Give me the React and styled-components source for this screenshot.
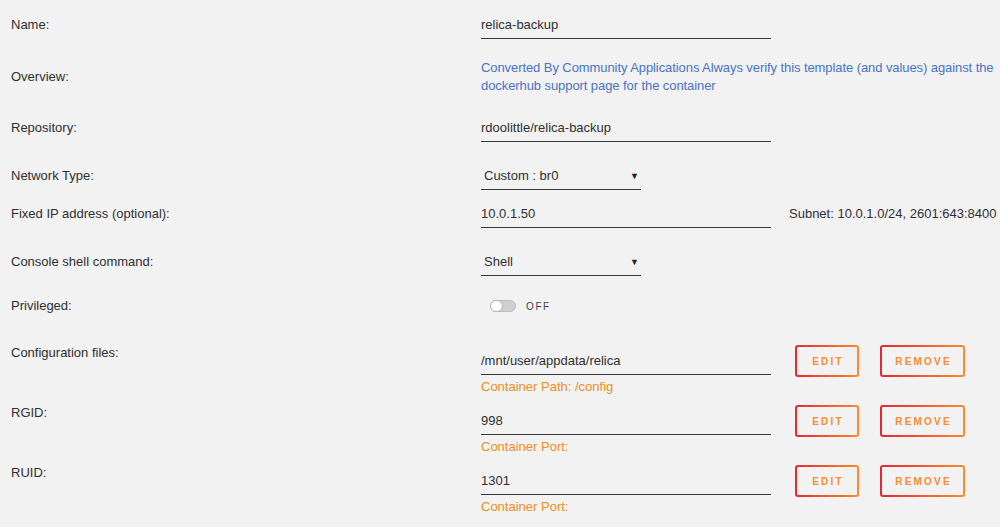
import styled, { createGlobalStyle } from "styled-components";

const GlobalStyle = createGlobalStyle`
  html, body {
    margin: 0;
    padding: 0;
    background: #f2f2f2;
    overflow: hidden;
  }
  body {
    font-family: "Liberation Sans", Arial, sans-serif;
    font-size: 13px;
    color: #2f2f2f;
  }
`;

const Form = styled.div`
  width: 1000px;
  height: 527px;
  overflow: hidden;
  white-space: nowrap;
`;

const Row = styled.div`
  display: grid;
  grid-template-columns: 481px 1fr;
  align-items: ${(p) => (p.$center ? "center" : "start")};
  margin-top: ${(p) => p.$top || 0}px;
  min-height: ${(p) => p.$height || 0}px;
`;

const Label = styled.div`
  padding-left: 11px;
  line-height: 20px;
`;

const Value = styled.div`
  display: flex;
  align-items: flex-start;
`;

const Field = styled.div`
  display: flex;
  flex-direction: column;
  margin-top: ${(p) => p.$top || 0}px;
`;

const Input = styled.div`
  width: ${(p) => p.$width || 290}px;
  box-sizing: border-box;
  line-height: 20px;
  padding: 0 0 3px ${(p) => p.$pad || 0}px;
  border-bottom: 1px solid #3a3a3a;
  display: flex;
  justify-content: space-between;
  align-items: center;
`;

const Arrow = styled.span`
  font-size: 9px;
  color: #222;
  padding-right: 2px;
`;

const Overview = styled.div`
  color: #4a72c4;
  line-height: 18px;
  white-space: normal;
  width: 519px;
  letter-spacing: -0.08px;
`;

const Subnet = styled.span`
  margin-left: 18px;
  line-height: 20px;
`;

const Hint = styled.div`
  color: #ee8f1c;
  line-height: 18px;
  margin-top: 3px;
`;

const Toggle = styled.div`
  display: flex;
  align-items: center;
  gap: 10px;
  padding-left: 9px;
  height: 20px;
`;

const Track = styled.div`
  width: 26px;
  height: 12px;
  border-radius: 6px;
  background: #cfcfcf;
  border: 1px solid #bdbdbd;
  box-sizing: border-box;
  position: relative;
`;

const Knob = styled.div`
  position: absolute;
  left: -1px;
  top: -1px;
  width: 13px;
  height: 12px;
  border-radius: 6px;
  background: #ffffff;
  border: 1px solid #b5b5b5;
  box-sizing: border-box;
`;

const ToggleText = styled.span`
  font-size: 10px;
  letter-spacing: 1.6px;
  color: #444;
`;

const Buttons = styled.div`
  display: flex;
  gap: 21px;
  margin-left: 24px;
  margin-top: 2px;
`;

const Btn = styled.button`
  width: ${(p) => p.$width}px;
  height: 32px;
  box-sizing: border-box;
  border: 2px solid transparent;
  border-radius: 3px;
  background: linear-gradient(#f2f2f2, #f2f2f2) padding-box,
    linear-gradient(90deg, #e5272f, #ff8a2e) border-box;
  color: #f58d33;
  font-family: "Liberation Sans", Arial, sans-serif;
  font-size: 10px;
  font-weight: bold;
  letter-spacing: 2.2px;
  padding: 0 0 0 2px;
  cursor: pointer;
`;

const pathRows = [
  { label: "Configuration files:", value: "/mnt/user/appdata/relica", hint: "Container Path: /config" },
  { label: "RGID:", value: "998", hint: "Container Port:" },
  { label: "RUID:", value: "1301", hint: "Container Port:" },
];

export default function App() {
  return (
    <Form>
      <GlobalStyle />
      <Row $top={15}>
        <Label>Name:</Label>
        <Value>
          <Input>relica-backup</Input>
        </Value>
      </Row>
      <Row $top={20} $center>
        <Label>Overview:</Label>
        <Overview>
          Converted By Community Applications Always verify this template (and values) against the
          dockerhub support page for the container
        </Overview>
      </Row>
      <Row $top={23}>
        <Label>Repository:</Label>
        <Value>
          <Input>rdoolittle/relica-backup</Input>
        </Value>
      </Row>
      <Row $top={24}>
        <Label>Network Type:</Label>
        <Value>
          <Input $width={160} $pad={3}>
            Custom : br0<Arrow>▼</Arrow>
          </Input>
        </Value>
      </Row>
      <Row $top={14}>
        <Label>Fixed IP address (optional):</Label>
        <Value>
          <Input>10.0.1.50</Input>
          <Subnet>Subnet: 10.0.1.0/24, 2601:643:8400</Subnet>
        </Value>
      </Row>
      <Row $top={24}>
        <Label>Console shell command:</Label>
        <Value>
          <Input $width={160} $pad={3}>
            Shell<Arrow>▼</Arrow>
          </Input>
        </Value>
      </Row>
      <Row $top={20}>
        <Label>Privileged:</Label>
        <Toggle>
          <Track>
            <Knob />
          </Track>
          <ToggleText>OFF</ToggleText>
        </Toggle>
      </Row>
      {pathRows.map((r, i) => (
        <Row key={r.label} $top={i === 0 ? 27 : 0} $height={60}>
          <Label>{r.label}</Label>
          <Value>
            <Field $top={8}>
              <Input>{r.value}</Input>
              <Hint>{r.hint}</Hint>
            </Field>
            <Buttons>
              <Btn $width={64}>EDIT</Btn>
              <Btn $width={85}>REMOVE</Btn>
            </Buttons>
          </Value>
        </Row>
      ))}
    </Form>
  );
}
